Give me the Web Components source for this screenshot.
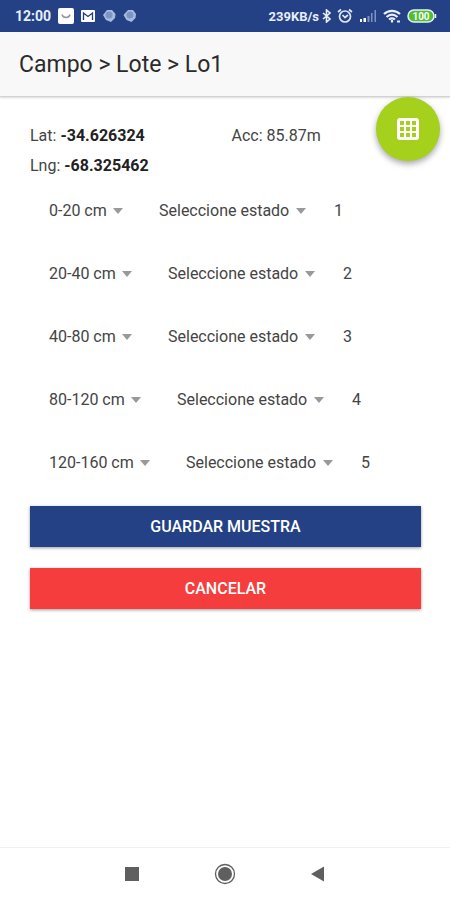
<!DOCTYPE html>
<html lang="es">
<head>
<meta charset="utf-8">
<meta name="viewport" content="width=device-width, initial-scale=1">
<title>Campo</title>
<style>
    body {
        margin: 0;
        background: #fff;
        color: #444;
        font-family: Roboto, sans-serif;
        font-size: 16px;
    }
</style>
</head>
<body>
<muestra-page></muestra-page>

<script>
// Barra d'estat del telefon
class StatusBar extends HTMLElement {
    constructor(){
        super();
        this.attachShadow({mode : 'open'});
    }
    connectedCallback() {
        this.render();
    }
    render(){
        this.shadowRoot.innerHTML = `
            <style>
                :host {
                    display: flex;
                    justify-content: space-between;
                    align-items: center;
                    height: 32px;
                    padding: 0 13px 0 15px;
                    background: #244186;
                    color: #e9eefb;
                    font-size: 14px;
                    font-weight: 700;
                }
                .group {
                    display: flex;
                    align-items: center;
                    gap: 7px;
                }
                .right {
                    gap: 6px;
                    font-size: 13px;
                }
                .red {
                    display: flex;
                    align-items: center;
                    gap: 3px;
                }
                svg {
                    display: block;
                }
            </style>
            <div class="group">
                <span>12:00</span>
                <svg width="16" height="16" viewBox="0 0 16 16">
                    <rect width="16" height="16" rx="2" fill="#fff"/>
                    <path d="M4 6.500c1 4 7 4 8 0" fill="none" stroke="#8b93a8" stroke-width="1.400"/>
                </svg>
                <svg width="14" height="12" viewBox="0 0 14 12">
                    <rect width="14" height="12" rx="1" fill="#fff"/>
                    <path d="M2.500 10V3L7 6.500 11.500 3v7" fill="none" stroke="#25377c" stroke-width="1.300"/>
                </svg>
                <svg width="34" height="14" viewBox="0 0 34 14">
                    <g fill="#a9bbdd">
                        <path d="M5 1h5l3.500 4-.5 4-4 4-5-2-3-5z"/>
                        <path d="M26 1h5l3 4-.5 4-4 4-5-2-3-5z"/>
                    </g>
                    <g fill="#7c95c6">
                        <circle cx="7" cy="6" r="3.500"/>
                        <circle cx="28" cy="6" r="3.500"/>
                    </g>
                </svg>
            </div>
            <div class="group right">
                <div class="red">
                    <span>239KB/s</span>
                    <svg width="9" height="14" viewBox="0 0 9 14" fill="none" stroke="#e9eefb" stroke-width="1.600">
                        <path d="M1 4l7 6-3.500 3V1L8 4l-7 6"/>
                    </svg>
                </div>
                <svg width="16" height="16" viewBox="0 0 16 16" fill="none" stroke="#e0e7f6" stroke-width="1.700">
                    <circle cx="8" cy="8.500" r="5.500"/>
                    <path d="M5.500 7L8 9.500l3-2.500M1 4l3-2.500M15 4l-3-2.500"/>
                </svg>
                <svg width="18" height="14" viewBox="0 0 18 14">
                    <path d="M1 13v-3h2v3zM4.500 13V9h2.500v4z" fill="#fff"/>
                    <path d="M8.500 13V7h2v6zM12 13V4h1.500v9zM15.500 13V1H17v12z" fill="#7f93c4"/>
                </svg>
                <svg width="18" height="14" viewBox="0 0 18 14" fill="none" stroke="#e9eefb" stroke-width="2.200">
                    <path d="M1 5c4.500-4.300 11.500-4.300 16 0M3.500 8c3.500-3 7.500-3 11 0M6 10.500c2-1.600 4-1.600 6 0"/>
                    <path d="M9 11v2.500M14 12.500h3"/>
                </svg>
                <svg width="30" height="14" viewBox="0 0 30 14">
                    <rect x="1" y="1" width="26" height="12" rx="6" fill="#4cc02f" stroke="#e9eefb" stroke-width="1.500"/>
                    <path d="M28.500 5v4" stroke="#e9eefb" stroke-width="1.500"/>
                    <text x="14" y="10.500" text-anchor="middle" font-size="10" fill="#fff">100</text>
                </svg>
            </div>`;
    }
}
customElements.define('status-bar', StatusBar);

class TitleBar extends HTMLElement {
    constructor(){
        super();
        this.attachShadow({mode : 'open'});
    }
    connectedCallback() {
        this.render();
    }
    render(){
        this.shadowRoot.innerHTML = `
            <style>
                :host {
                    display: flex;
                    align-items: center;
                    height: 64px;
                    padding: 0 19px;
                    background: #f8f8f8;
                    border-bottom: 1px solid #d2d2d2;
                    box-shadow: 0 1px 2px rgba(0, 0, 0, 0.15);
                }
                h1 {
                    margin: 0;
                    font-size: 23px;
                    font-weight: 400;
                    color: #2b2b2b;
                }
            </style>
            <h1><slot></slot></h1>`;
    }
}
customElements.define('title-bar', TitleBar);

// Boto rodo flotant
class GridFab extends HTMLElement {
    constructor(){
        super();
        this.attachShadow({mode : 'open'});
    }
    connectedCallback() {
        this.render();
    }
    render(){
        this.shadowRoot.innerHTML = `
            <style>
                :host {
                    display: block;
                }
                button {
                    display: grid;
                    place-items: center;
                    width: 64px;
                    height: 64px;
                    padding: 0;
                    border: 0;
                    border-radius: 50%;
                    background: #a5d01b;
                    box-shadow: 0 3px 6px rgba(0, 0, 0, 0.35);
                }
            </style>
            <button type="button" aria-label="Grilla">
                <svg width="22" height="22" viewBox="0 0 22 22">
                    <rect width="22" height="22" rx="3" fill="#fff"/>
                    <path fill="#a5d01b" d="M3 3h4v4H3zM9 3h4v4H9zM15 3h4v4h-4zM3 9h4v4H3zM9 9h4v4H9zM15 9h4v4h-4zM3 15h4v4H3zM9 15h4v4H9zM15 15h4v4h-4z"/>
                </svg>
            </button>`;
    }
}
customElements.define('grid-fab', GridFab);

class DropDown extends HTMLElement {
    constructor(){
        super();
        this.attachShadow({mode : 'open'});
    }
    connectedCallback() {
        this.render();
    }
    render(){
        const valor = this.getAttribute('valor') || '';
        const etiqueta = this.getAttribute('etiqueta') || '';
        this.shadowRoot.innerHTML = `
            <style>
                :host {
                    display: inline-grid;
                    align-items: center;
                }
                select, svg {
                    grid-area: 1 / 1;
                }
                select {
                    appearance: none;
                    margin: 0;
                    padding: 0 16px 0 0;
                    border: 0;
                    background: none;
                    color: inherit;
                    font: inherit;
                    line-height: 24px;
                }
                svg {
                    justify-self: end;
                    pointer-events: none;
                }
            </style>
            <select aria-label="${etiqueta}">
                <option>${valor}</option>
            </select>
            <svg width="10" height="6" viewBox="0 0 10 6"><path d="M0 0h10L5 6z" fill="#999"/></svg>`;
    }
}
customElements.define('drop-down', DropDown);

/**
 * Una fila: profunditat, estat i numero
 */
class MuestraRow extends HTMLElement {
    constructor(){
        super();
        this.attachShadow({mode : 'open'});
    }
    connectedCallback() {
        this.render();
    }
    render(){
        const rango = this.getAttribute('rango') || '';
        const numero = this.getAttribute('numero') || '';
        this.shadowRoot.innerHTML = `
            <style>
                :host {
                    display: flex;
                    align-items: center;
                    height: 63px;
                    padding-left: 19px;
                }
                .estado {
                    margin: 0 28px 0 36px;
                }
            </style>
            <drop-down etiqueta="Profundidad" valor="${rango}"></drop-down>
            <drop-down class="estado" etiqueta="Estado" valor="Seleccione estado"></drop-down>
            <span>${numero}</span>`;
    }
}
customElements.define('muestra-row', MuestraRow);

class ActionButton extends HTMLElement {
    constructor(){
        super();
        this.attachShadow({mode : 'open'});
    }
    connectedCallback() {
        this.render();
    }
    render(){
        this.shadowRoot.innerHTML = `
            <style>
                :host {
                    display: block;
                }
                button {
                    display: block;
                    width: 100%;
                    height: 41px;
                    padding: 0;
                    border: 0;
                    background: var(--fondo, #244186);
                    color: #fff;
                    font: inherit;
                    font-weight: 500;
                    text-transform: uppercase;
                    box-shadow: 0 1px 3px rgba(0, 0, 0, 0.4);
                }
            </style>
            <button type="button"><slot></slot></button>`;
    }
}
customElements.define('action-button', ActionButton);

// Botons de navegacio d'Android
class NavBar extends HTMLElement {
    constructor(){
        super();
        this.attachShadow({mode : 'open'});
    }
    connectedCallback() {
        this.render();
    }
    render(){
        this.shadowRoot.innerHTML = `
            <style>
                :host {
                    display: flex;
                    justify-content: center;
                    align-items: center;
                    gap: 69px;
                    height: 52px;
                    border-top: 1px solid #f1f1f1;
                }
                button {
                    display: block;
                    width: 24px;
                    height: 24px;
                    padding: 0;
                    border: 0;
                    background: none;
                }
                svg {
                    display: block;
                }
            </style>
            <button type="button" aria-label="Recientes">
                <svg width="24" height="24"><rect x="5" y="5" width="14" height="14" fill="#5f5f5f"/></svg>
            </button>
            <button type="button" aria-label="Inicio">
                <svg width="24" height="24">
                    <circle cx="12" cy="12" r="9.500" fill="none" stroke="#5f5f5f" stroke-width="1.300"/>
                    <circle cx="12" cy="12" r="7" fill="#5f5f5f"/>
                </svg>
            </button>
            <button type="button" aria-label="Atras">
                <svg width="24" height="24"><path d="M18 4.500v15L5 12z" fill="#5f5f5f"/></svg>
            </button>`;
    }
}
customElements.define('nav-bar', NavBar);

class MuestraPage extends HTMLElement {
    constructor(){
        super();
        this.attachShadow({mode : 'open'});
        this.rangos = ['0-20 cm', '20-40 cm', '40-80 cm', '80-120 cm', '120-160 cm'];
    }
    connectedCallback() {
        this.render();
    }
    render(){
        const files = this.rangos.map((r, i) => `<muestra-row rango="${r}" numero="${i + 1}"></muestra-row>`).join('');
        this.shadowRoot.innerHTML = `
            <style>
                :host {
                    display: flex;
                    flex-direction: column;
                    min-height: 100vh;
                }
                main {
                    position: relative;
                    flex: 1;
                    padding: 24px 29px 20px 30px;
                }
                /* flota damunt del contingut */
                grid-fab {
                    position: absolute;
                    top: 0;
                    right: 10px;
                }
                .coords {
                    display: grid;
                    grid-template-columns: 1fr 1fr;
                    column-gap: 12px;
                    line-height: 30px;
                    margin-bottom: -2px;
                }
                b {
                    font-weight: 700;
                    color: #222;
                }
                .acciones {
                    display: grid;
                    gap: 21px;
                    margin-top: 12px;
                }
                .cancelar {
                    --fondo: #f63d3d;
                }
            </style>
            <status-bar></status-bar>
            <title-bar>Campo &gt; Lote &gt; Lo1</title-bar>
            <main>
                <div class="coords">
                    <span>Lat: <b>-34.626324</b></span>
                    <span>Acc: 85.87m</span>
                    <span>Lng: <b>-68.325462</b></span>
                </div>
                ${files}
                <div class="acciones">
                    <action-button>Guardar muestra</action-button>
                    <action-button class="cancelar">Cancelar</action-button>
                </div>
                <grid-fab></grid-fab>
            </main>
            <nav-bar></nav-bar>`;
    }
}
customElements.define('muestra-page', MuestraPage);
</script>
</body>
</html>
